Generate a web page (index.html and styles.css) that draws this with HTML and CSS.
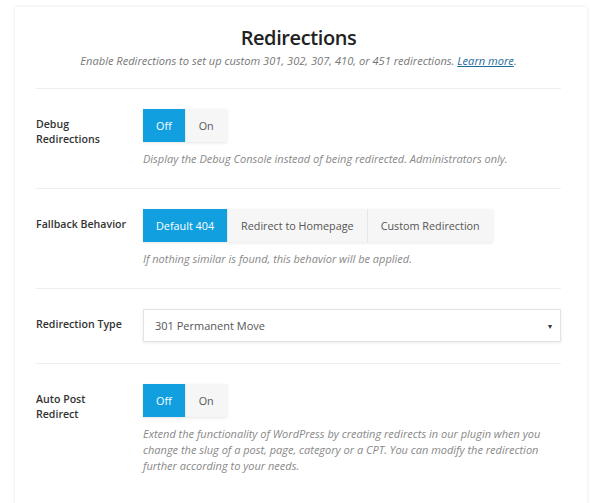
FILE: index.html
```html
<!DOCTYPE html>
<html lang="en">
  <head>
    <meta charset="UTF-8" />
    <meta name="viewport" content="width=device-width, initial-scale=1.0" />
    <title>Redirections</title>
    <link rel="stylesheet" href="styles.css">
  </head>
  <body>
    <div class="card">
      <div class="card-header">
        <h2>Redirections</h2>
        <p class="subtitle">
          Enable Redirections to set up custom 301, 302, 307, 410, or 451 redirections.
          <a href="#">Learn more</a>.
        </p>
      </div>

      <div class="setting">
        <div class="setting-label">Debug<br />Redirections</div>
        <div class="setting-field">
          <div class="btn-group">
            <button class="active">Off</button>
            <button>On</button>
          </div>
          <p class="description">Display the Debug Console instead of being redirected. Administrators only.</p>
        </div>
      </div>

      <div class="setting">
        <div class="setting-label">Fallback Behavior</div>
        <div class="setting-field">
          <div class="btn-group">
            <button class="active">Default 404</button>
            <button>Redirect to Homepage</button>
            <button>Custom Redirection</button>
          </div>
          <p class="description">If nothing similar is found, this behavior will be applied.</p>
        </div>
      </div>

      <div class="setting">
        <div class="setting-label">Redirection Type</div>
        <div class="setting-field">
          <div class="select">
            <span>301 Permanent Move</span>
            <span class="arrow">&#9662;</span>
          </div>
        </div>
      </div>

      <div class="setting">
        <div class="setting-label">Auto Post<br />Redirect</div>
        <div class="setting-field">
          <div class="btn-group">
            <button class="active">Off</button>
            <button>On</button>
          </div>
          <p class="description">Extend the functionality of WordPress by creating redirects in our plugin when you change the slug of a post, page, category or a CPT. You can modify the redirection further according to your needs.</p>
        </div>
      </div>
    </div>
  </body>
</html>
```

FILE: styles.css
```css
body {
  font-family: "Open Sans", "Noto Sans", sans-serif;
  margin: 0;
  padding: 7px 14px 0 15px;
  background-color: #ffffff;
  color: #333;
}

.card {
  background-color: #fff;
  box-shadow: 0 0 3px rgba(0, 0, 0, 0.12);
  padding: 0 26px 30px 21px;
  min-height: 520px;
}

.card-header {
  text-align: center;
  padding-top: 17px;
  padding-bottom: 19px;
  border-bottom: 1px solid #efefef;
}

h2 {
  margin: 0;
  font-size: 20px;
  font-weight: 600;
  line-height: 28px;
  color: #222;
  letter-spacing: -0.4px;
}

.subtitle {
  margin: 1px 0 0;
  font-size: 11.1px;
  font-style: italic;
  color: #777;
  line-height: 16px;
}

.subtitle a {
  color: #1c6b9a;
}

.setting {
  display: flex;
  border-bottom: 1px solid #efefef;
  padding: 20px 0 21px;
}

.setting:last-child {
  border-bottom: none;
}

.setting-label {
  width: 107px;
  flex-shrink: 0;
  padding-top: 8px;
  font-size: 10.6px;
  font-weight: 600;
  line-height: 15px;
  color: #333;
}

.setting-field {
  flex: 1;
}

.btn-group {
  display: inline-flex;
  box-shadow: 0 1px 3px rgba(0, 0, 0, 0.1);
}

.btn-group button {
  font-family: inherit;
  font-size: 10.8px;
  height: 33px;
  padding: 0 13px;
  border: none;
  border-right: 1px solid #e6e6e6;
  background-color: #f6f6f6;
  color: #555;
  cursor: pointer;
}

.btn-group button:last-child {
  border-right: none;
}

.btn-group button.active {
  background-color: #129fe0;
  color: #fff;
}

.description {
  margin: 9px 0 0;
  font-size: 11px;
  font-style: italic;
  color: #888;
  line-height: 16px;
}

.select {
  display: flex;
  align-items: center;
  justify-content: space-between;
  height: 31px;
  padding: 0 8px 0 11px;
  border: 1px solid #e4e4e4;
  box-shadow: 0 1px 3px rgba(0, 0, 0, 0.08);
  font-size: 11px;
  color: #555;
}

.select .arrow {
  font-size: 8px;
  color: #333;
}
```
